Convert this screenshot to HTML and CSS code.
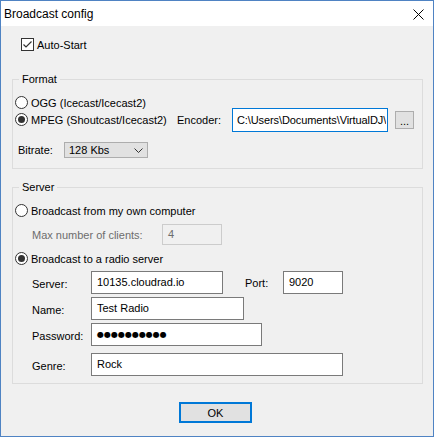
FILE: index.html
```html
<!DOCTYPE html>
<html lang="en">
<head>
    <meta charset="UTF-8">
    <meta name="viewport" content="width=device-width, initial-scale=1.0">
    <title>Broadcast config</title>
    <link rel="stylesheet" href="styles.css">
</head>
<body>
    <div class="window">
        <div class="titlebar">
            <span class="title">Broadcast config</span>
            <svg class="close" width="11" height="11" viewBox="0 0 11 11">
                <path d="M0.5 0.5 L10.5 10.5 M10.5 0.5 L0.5 10.5" stroke="#000" stroke-width="1"/>
            </svg>
        </div>

        <div class="dialog">
            <div class="check-row">
                <span class="checkbox">
                    <svg width="11" height="11" viewBox="0 0 11 11">
                        <path d="M1.5 5.5 L4 8 L9.5 2.5" fill="none" stroke="#333" stroke-width="1.2"/>
                    </svg>
                </span>
                <span>Auto-Start</span>
            </div>

            <fieldset class="group format">
                <legend>Format</legend>
                <div class="row ogg">
                    <span class="radio"></span>
                    <span>OGG (Icecast/Icecast2)</span>
                </div>
                <div class="row mpeg">
                    <span class="radio on"></span>
                    <span class="mpeg-label">MPEG (Shoutcast/Icecast2)</span>
                    <span class="enc-label">Encoder:</span>
                    <div class="edit focused encoder"><span class="clip">C:\Users\Documents\VirtualDJ\</span></div>
                    <div class="btn browse">...</div>
                </div>
                <div class="row bitrate">
                    <span class="bit-label">Bitrate:</span>
                    <div class="combo">
                        <span>128 Kbs</span>
                        <svg width="9" height="5" viewBox="0 0 9 5">
                            <path d="M0.5 0.5 L4.5 4.5 L8.5 0.5" fill="none" stroke="#333" stroke-width="1"/>
                        </svg>
                    </div>
                </div>
            </fieldset>

            <fieldset class="group server">
                <legend>Server</legend>
                <div class="row own">
                    <span class="radio"></span>
                    <span>Broadcast from my own computer</span>
                </div>
                <div class="row clients">
                    <span class="disabled-label">Max number of clients:</span>
                    <div class="edit disabled max">4</div>
                </div>
                <div class="row remote">
                    <span class="radio on"></span>
                    <span>Broadcast to a radio server</span>
                </div>
                <div class="row field server-row">
                    <span class="field-label">Server:</span>
                    <div class="edit host">10135.cloudrad.io</div>
                    <span class="port-label">Port:</span>
                    <div class="edit port">9020</div>
                </div>
                <div class="row field name-row">
                    <span class="field-label">Name:</span>
                    <div class="edit name">Test Radio</div>
                </div>
                <div class="row field pass-row">
                    <span class="field-label">Password:</span>
                    <div class="edit pass"><span class="dots">●●●●●●●●●●</span></div>
                </div>
                <div class="row field genre-row">
                    <span class="field-label">Genre:</span>
                    <div class="edit genre">Rock</div>
                </div>
            </fieldset>

            <div class="footer">
                <div class="btn ok">OK</div>
            </div>
        </div>
    </div>
</body>
</html>
```
FILE: styles.css
```css
/* Win10 style dialog */
* {
    box-sizing: border-box;
}

body {
    margin: 0;
    font-family: "Liberation Sans", Arial, sans-serif;
    font-size: 11px;
    color: #000;
}

.window {
    width: 434px;
    height: 437px;
    border: 1px solid #4f83c3;
    background: #f0f0f0;
    display: flex;
    flex-direction: column;
}

.titlebar {
    height: 25px;
    background: #fff;
    display: flex;
    align-items: center;
    padding-left: 3px;
}

.title {
    font-size: 12px;
    flex: 1;
}

.close {
    margin-right: 9px;
    margin-top: 1px;
}

.dialog {
    flex: 1;
    padding-top: 12px;
}

.check-row {
    display: flex;
    align-items: center;
    height: 13px;
    margin-left: 20px;
    gap: 3px;
}

.checkbox {
    width: 13px;
    height: 13px;
    border: 1px solid #333;
    background: #fff;
    display: flex;
}

/* group boxes */
.group {
    margin: 0 10px 0 11px;
    padding: 0 0 0 2px;
    border: 1px solid #dcdcdc;
    min-width: 0;
}

.group legend {
    margin-left: 4px;
    padding: 0 3px;
    line-height: 15px;
    font-size: 11px;
}

.format {
    margin-top: 21px;
    padding-bottom: 10px;
}

.server {
    margin-top: 11px;
    padding-bottom: 7px;
}

.row {
    display: flex;
    align-items: center;
}

.radio {
    width: 13px;
    height: 13px;
    border: 1px solid #333;
    border-radius: 50%;
    background: #fff;
    margin-right: 3px;
    display: flex;
    align-items: center;
    justify-content: center;
}

.radio.on::after {
    content: "";
    width: 7px;
    height: 7px;
    border-radius: 50%;
    background: #333;
}

.ogg {
    height: 13px;
    margin-top: 9px;
}

.mpeg {
    height: 24px;
    margin-top: -1px;
}

.mpeg .radio {
    margin-bottom: 2px;
}

.mpeg-label {
    width: 146px;
}

.enc-label {
    width: 55px;
}

.edit {
    height: 23px;
    border: 1px solid #7a7a7a;
    background: #fff;
    padding: 0 4px 1px 5px;
    display: flex;
    align-items: center;
    white-space: nowrap;
    overflow: hidden;
}

.edit.focused {
    border-color: #0078d7;
}

.encoder {
    width: 156px;
    height: 24px;
    padding: 0 1px 1px 4px;
}

.clip {
    overflow: hidden;
    min-width: 0;
    letter-spacing: -0.1px;
}

.btn {
    background: #e1e1e1;
    border: 1px solid #adadad;
    display: flex;
    align-items: center;
    justify-content: center;
}

.browse {
    width: 19px;
    height: 18px;
    margin-left: 7px;
    padding-top: 2px;
}

.bitrate {
    height: 16px;
    margin-top: 10px;
    padding-left: 3px;
}

.bit-label {
    width: 46px;
}

.combo {
    width: 84px;
    height: 16px;
    background: #e1e1e1;
    border: 1px solid #adadad;
    display: flex;
    align-items: center;
    justify-content: space-between;
    padding: 0 4px 0 4px;
}

.own {
    height: 13px;
    margin-top: 9px;
}

.clients {
    height: 21px;
    margin-top: 7px;
    padding-left: 17px;
}

.disabled-label {
    color: #6d6d6d;
    width: 130px;
}

.edit.disabled {
    border-color: #cccccc;
    background: #f0f0f0;
    color: #6d6d6d;
    width: 60px;
    height: 21px;
}

.remote {
    height: 13px;
    margin-top: 7px;
}

.field {
    height: 23px;
    padding-left: 17px;
}

.field-label {
    width: 59px;
    padding-top: 3px;
}

.server-row {
    margin-top: 6px;
}

.name-row,
.pass-row {
    margin-top: 3px;
}

.genre-row {
    margin-top: 7px;
}

.host {
    width: 132px;
}

.port-label {
    margin-left: 22px;
    width: 38px;
    padding-top: 1px;
}

.port {
    width: 60px;
}

.name {
    width: 153px;
}

.pass {
    width: 171px;
}

.dots {
    font-family: "DejaVu Sans", sans-serif;
    font-size: 8px;
}

.genre {
    width: 252px;
}

.footer {
    display: flex;
    justify-content: center;
    padding-right: 3px;
    margin-top: 18px;
}

.ok {
    width: 73px;
    height: 21px;
    border: 2px solid #0078d7;
}
```
